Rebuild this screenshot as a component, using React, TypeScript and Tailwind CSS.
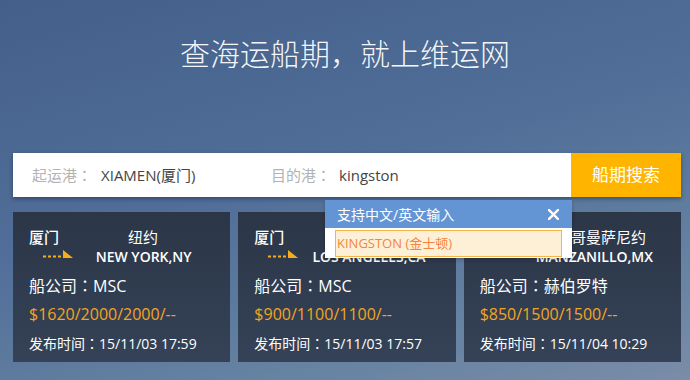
import React from "react";

type Route = {
  from: string;
  toCn: string;
  toEn: string;
  carrier: string;
  price: string;
  time: string;
};

const routes: Route[] = [
  { from: "厦门", toCn: "纽约", toEn: "NEW YORK,NY", carrier: "MSC", price: "$1620/2000/2000/--", time: "15/11/03 17:59" },
  { from: "厦门", toCn: "洛杉矶", toEn: "LOS ANGELES,CA", carrier: "MSC", price: "$900/1100/1100/--", time: "15/11/03 17:57" },
  { from: "厦门", toCn: "墨西哥曼萨尼约", toEn: "MANZANILLO,MX", carrier: "赫伯罗特", price: "$850/1500/1500/--", time: "15/11/04 10:29" },
];

// full-width colon drawn centred in its cell, as the reference font does
function Colon() {
  return <span className="font-['Noto_Sans_CJK_TC',sans-serif]">：</span>;
}

function DashArrow() {
  return (
    <svg width="30" height="8" viewBox="0 0 30 8" className="block">
      <line x1="0" y1="6.5" x2="20" y2="6.5" stroke="#f6ad1c" strokeWidth="2" strokeDasharray="3 2" />
      <polygon points="20,0 30,8 20,8" fill="#f6ad1c" />
    </svg>
  );
}

function RouteCard({ route }: { route: Route }) {
  return (
    <div className="h-[150px] bg-gradient-to-b from-[#2b3647] to-[#354257] px-[16px] pt-[16px] text-white">
      <div className="flex h-[18px] items-center text-[15px] leading-[18px]">
        <span className="w-[44px] font-medium">{route.from}</span>
        <span className="w-[148px] whitespace-nowrap text-center">{route.toCn}</span>
      </div>
      <div className="mt-[2px] flex h-[18px]">
        <div className="w-[44px] pl-[14px] pt-[2px]">
          <DashArrow />
        </div>
        <span className="w-[148px] whitespace-nowrap text-center text-[14px] font-semibold leading-[18px]">{route.toEn}</span>
      </div>
      <p className="mt-[8px] text-[16px] leading-[22px]">
        船公司<Colon />{route.carrier}
      </p>
      <p className="mt-[6px] text-[16px] leading-[22px] text-[#f4a521]">{route.price}</p>
      <p className="mt-[8px] text-[14px] leading-[20px]">
        发布时间<Colon />{route.time}
      </p>
    </div>
  );
}

export default function App() {
  return (
    <div className="relative h-[380px] w-[690px] overflow-hidden bg-[linear-gradient(165deg,#44608a_0%,#506e98_45%,#6683a2_80%,#7a8ca8_100%)] font-['Open_Sans','Noto_Sans_CJK_SC',sans-serif]">
      <h1 className="pt-[34px] text-center text-[30px] font-light leading-[40px] text-white/95">查海运船期，就上维运网</h1>

      <div className="relative ml-[13px] mt-[79px] w-[668px]">
        <div className="flex h-[44px] shadow-[0_2px_4px_rgba(20,30,50,0.45)]">
          <div className="flex flex-1 items-center bg-white text-[15px]">
            <div className="flex w-[258px] pl-[19px]">
              <span className="text-[#b3b3b3]">
                起运港<Colon />
              </span>
              <span className="ml-[9px] text-[#444]">XIAMEN(厦门)</span>
            </div>
            <div className="flex">
              <span className="text-[#b3b3b3]">
                目的港<Colon />
              </span>
              <span className="ml-[8px] text-[#444]">kingston</span>
            </div>
          </div>
          <button className="w-[110px] bg-[#ffb400] text-[17px] text-white">船期搜索</button>
        </div>

        <div className="mt-[15px] grid grid-cols-3 gap-2">
          {routes.map((r) => (
            <RouteCard key={r.toEn} route={r} />
          ))}
        </div>

        <div className="absolute left-[312px] top-[47px] w-[247px] shadow-[0_2px_4px_rgba(0,0,0,0.2)]">
          <div className="flex h-[28px] items-center justify-between bg-[#6394d3] pl-[12px] pr-[13px] text-[14px] text-white">
            <span>支持中文/英文输入</span>
            <svg width="11" height="11" viewBox="0 0 11 11">
              <path d="M1 1L10 10M10 1L1 10" stroke="white" strokeWidth="2.4" strokeLinecap="square" />
            </svg>
          </div>
          <div className="bg-white px-[10px] pb-[1px] pt-[2px]">
            <div className="flex h-[27px] items-center border border-[#f3b44a] bg-[#fdf0d6] pl-[1px] text-[13px] text-[#f5843f]">
              KINGSTON (金士顿)
            </div>
          </div>
        </div>
      </div>
    </div>
  );
}
